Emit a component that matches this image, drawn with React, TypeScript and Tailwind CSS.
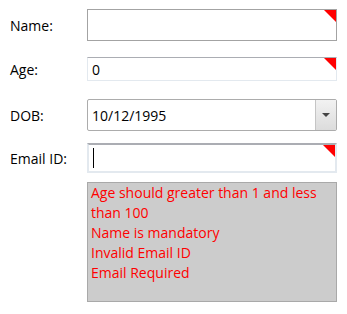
const Corner = () => (
  <span className="absolute right-0 top-0 h-0 w-0 border-l-[12px] border-t-[12px] border-l-transparent border-t-[#ff0000]" />
)

const Row = ({ label, children, className }: { label: string; children: React.ReactNode; className: string }) => (
  <div className={`flex items-center ${className}`}>
    <div className="w-[87px] shrink-0 pl-[10px] text-[14px] text-black">{label}</div>
    {children}
  </div>
)

export default function App() {
  return (
    <div
      className="h-[314px] w-[347px] bg-white pt-[9px]"
      style={{ fontFamily: '"Open Sans", "Noto Sans", sans-serif' }}
    >
      <Row label="Name:" className="h-[32px]">
        <div className="relative h-[32px] w-[250px] border border-[#a3a3a3] bg-white">
          <Corner />
        </div>
      </Row>
      <Row label="Age:" className="mt-[16px] h-[24px]">
        <div className="relative flex h-[24px] w-[250px] items-center border border-[#e3e9ef] border-t-[#abadb3] bg-white pl-[4px] text-[14px]">
          0
          <Corner />
        </div>
      </Row>
      <Row label="DOB:" className="mt-[18px] h-[32px]">
        <div className="flex h-[32px] w-[250px] rounded-[2px] border border-[#acacac] bg-white">
          <div className="flex flex-1 items-center pl-[4px] text-[14px]">10/12/1995</div>
          <div className="flex w-[21px] items-center justify-center border-l border-[#c5c5c5] bg-gradient-to-b from-[#f2f2f2] to-[#dcdcdc]">
            <span className="h-0 w-0 border-x-[4px] border-t-[4px] border-x-transparent border-t-[#444]" />
          </div>
        </div>
      </Row>
      <Row label="Email ID:" className="mt-[12px] h-[30px]">
        <div className="relative flex h-[30px] w-[250px] items-center border-2 border-[#e3e9ef] border-t-[#abadb3] bg-white pl-[4px]">
          <span className="h-[20px] w-px bg-black" />
          <Corner />
        </div>
      </Row>
      <div className="ml-[87px] mt-[9px] h-[120px] w-[250px] border border-[#a9a9a9] bg-[#cccccc] pl-[3px] text-[14px] leading-[20px] text-[#ff0000]">
        <div>Age should greater than 1 and less than 100</div>
        <div>Name is mandatory</div>
        <div>Invalid Email ID</div>
        <div>Email Required</div>
      </div>
    </div>
  )
}
